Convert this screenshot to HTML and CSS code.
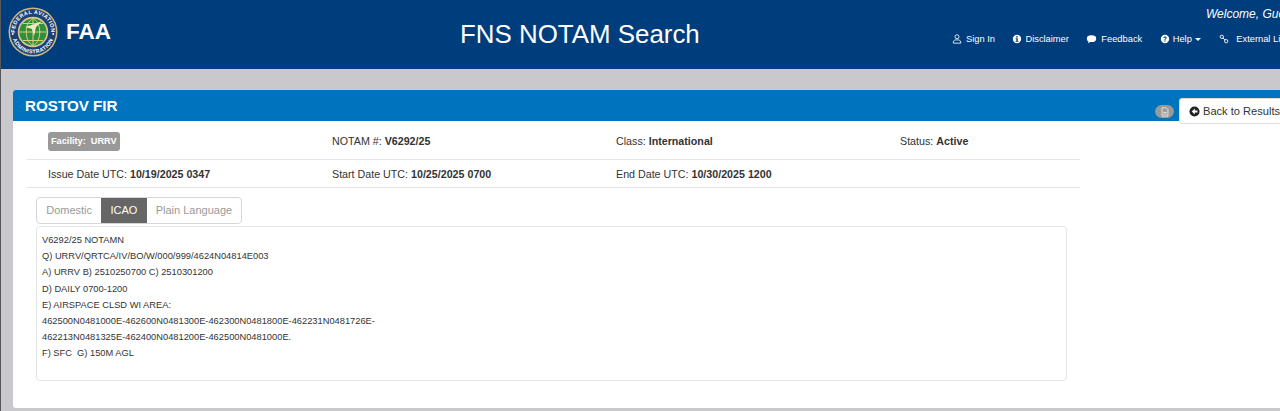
FILE: index.html
```html
<!DOCTYPE html>
<html lang="en">
<head>
    <meta charset="UTF-8">
    <meta name="viewport" content="width=device-width, initial-scale=1.0">
    <title>FNS NOTAM Search</title>
    <link rel="stylesheet" href="styles.css">
</head>
<body>

<div class="page">
    <header class="top_bar">
        <div class="brand">
            <svg class="seal" viewBox="0 0 50 50" width="50" height="50">
                <defs>
                    <path id="sealTop" d="M6.8 25a18.2 18.2 0 0 1 36.4 0"/>
                    <path id="sealBottom" d="M3.6 25a21.4 21.4 0 0 0 42.8 0"/>
                </defs>
                <circle cx="25" cy="25" r="24.5" fill="#c9b77c"/>
                <circle cx="25" cy="25" r="23" fill="#1d3f78"/>
                <circle cx="25" cy="25" r="15.2" fill="#d8c98c"/>
                <circle cx="25" cy="25" r="13.6" fill="#2f8f3c"/>
                <path d="M11.5 25h27M25 11.5v27M15 16.5h20M15 33.5h20M25 11.5c-9 4-9 23 0 27M25 11.5c9 4 9 23 0 27" fill="none" stroke="#d9cf7a" stroke-width="1"/>
                <path d="M17 20l10-3 7-3-6 6-2 9-2-7-7-2z" fill="#efe9c4"/>
                <text class="seal_text"><textPath href="#sealTop" startOffset="50%" text-anchor="middle">FEDERAL AVIATION</textPath></text>
                <text class="seal_text"><textPath href="#sealBottom" startOffset="50%" text-anchor="middle">ADMINISTRATION</textPath></text>
                <circle cx="4.8" cy="27" r="0.9" fill="#fff"/>
                <circle cx="45.2" cy="27" r="0.9" fill="#fff"/>
            </svg>
            <span class="faa">FAA</span>
        </div>
        <h1 class="app_title">FNS NOTAM Search</h1>
        <div class="user_area">
            <div class="welcome">Welcome, Guest</div>
            <nav class="nav_links">
                <a class="nav_link">
                    <svg class="nav_icon" viewBox="0 0 12 12"><circle cx="6" cy="3.3" r="2.4" fill="none" stroke="#fff"/><path d="M1.6 11v-1.4c0-1.7 1.6-2.3 2.6-2.5h3.6c1 .2 2.6.8 2.6 2.5V11z" fill="none" stroke="#fff"/></svg>
                    Sign In
                </a>
                <a class="nav_link tight">
                    <svg class="nav_icon" viewBox="0 0 12 12"><circle cx="6" cy="6" r="5" fill="#fff"/><rect x="5.1" y="2.6" width="1.8" height="1.7" fill="#003d7d"/><path d="M4.4 5.2h2.5v3.2h.8v1H4.4v-1h.8V6.2h-.8z" fill="#003d7d"/></svg>
                    Disclaimer
                </a>
                <a class="nav_link">
                    <svg class="nav_icon wide" viewBox="0 0 12 12"><ellipse cx="6" cy="5.6" rx="5.6" ry="4"/><path d="M3 8l-1.4 3L6 9z"/></svg>
                    Feedback
                </a>
                <a class="nav_link tight">
                    <svg class="nav_icon" viewBox="0 0 12 12"><circle cx="6" cy="6" r="5" fill="#fff"/><path d="M4.1 4.8c0-2.4 3.9-2.4 3.9-.2 0 1.4-1.5 1.3-1.5 2.5H5.3c0-1.7 1.4-1.6 1.4-2.4 0-.8-1.3-.8-1.4.1z" fill="#003d7d"/><rect x="5.2" y="7.7" width="1.4" height="1.4" fill="#003d7d"/></svg>
                    Help
                    <span class="caret"></span>
                </a>
                <a class="nav_link external">
                    <svg class="nav_icon" viewBox="0 0 12 12"><circle cx="3.4" cy="3.4" r="2" fill="none" stroke="#fff" stroke-width="1.1"/><circle cx="8.6" cy="8.6" r="2" fill="none" stroke="#fff" stroke-width="1.1"/><path d="M4.8 4.8l2.4 2.4" stroke="#fff" stroke-width="1.1"/></svg>
                    External Links
                </a>
            </nav>
        </div>
    </header>

    <main class="content">
        <section class="panel">
            <div class="panel_heading">
                <h2 class="panel_title">ROSTOV FIR</h2>
                <div class="panel_tools">
                    <span class="file_badge">
                        <svg viewBox="0 0 12 12" width="10" height="10"><path d="M2.5 1h5l2 2v8h-7z" fill="none" stroke="#eee" stroke-width="1"/><path d="M4 6.5h4M4 8.5h4" stroke="#eee" stroke-width="1"/></svg>
                    </span>
                    <a class="back_button">
                        <svg viewBox="0 0 12 12" width="11" height="11"><circle cx="6" cy="6" r="5.5" fill="#222"/><path d="M6.3 2.8L3 6l3.3 3.2V7.2h2.9V4.8H6.3z" fill="#fff"/></svg>
                        Back to Results
                    </a>
                </div>
            </div>

            <div class="info_row first_row">
                <div><span class="facility_badge">Facility:&nbsp; URRV</span></div>
                <div>NOTAM #: <b>V6292/25</b></div>
                <div>Class: <b>International</b></div>
                <div>Status: <b>Active</b></div>
            </div>
            <div class="info_row second_row">
                <div>Issue Date UTC: <b>10/19/2025 0347</b></div>
                <div>Start Date UTC: <b>10/25/2025 0700</b></div>
                <div>End Date UTC: <b>10/30/2025 1200</b></div>
            </div>

            <div class="tabs">
                <a class="tab">Domestic</a>
                <a class="tab active">ICAO</a>
                <a class="tab">Plain Language</a>
            </div>

            <div class="notam_box">
                <div>V6292/25 NOTAMN</div>
                <div>Q) URRV/QRTCA/IV/BO/W/000/999/4624N04814E003</div>
                <div>A) URRV B) 2510250700 C) 2510301200</div>
                <div>D) DAILY 0700-1200</div>
                <div>E) AIRSPACE CLSD WI AREA:</div>
                <div>462500N0481000E-462600N0481300E-462300N0481800E-462231N0481726E-</div>
                <div>462213N0481325E-462400N0481200E-462500N0481000E.</div>
                <div>F) SFC&nbsp; G) 150M AGL</div>
            </div>
        </section>
    </main>
</div>

</body>
</html>
```

FILE: styles.css
```css
html, body {
    margin: 0;
    height: 100%;
    overflow: hidden;
}

body {
    background: #c9c9cd;
    font-family: "Liberation Sans", Arial, sans-serif;
    color: #333333;
}

.page {
    width: 1340px;
    border-left: 1px solid #55585c;
    height: 100%;
}

/* Top bar */
.top_bar {
    display: flex;
    height: 69px;
    background: #003d7d;
    color: #FFFFFF;
}

.brand {
    display: flex;
    align-items: center;
    width: 459px;
    height: 64px;
    padding-left: 7px;
    box-sizing: border-box;
}

.seal {
    flex: none;
}

.seal_text {
    font-size: 5.4px;
    font-weight: bold;
    letter-spacing: 0.4px;
    fill: #FFFFFF;
}

.faa {
    margin-left: 8px;
    font-size: 22.5px;
    font-weight: bold;
}

.app_title {
    width: 492px;
    margin: 0;
    padding-top: 18px;
    font-size: 25.9px;
    line-height: 32px;
    font-weight: normal;
}

.user_area {
    flex: 1;
}

.welcome {
    padding: 7px 0 0 254px;
    font-size: 12px;
    line-height: 15px;
    font-style: italic;
}

.nav_links {
    display: flex;
    gap: 17.5px;
    margin-top: 10px;
    font-size: 9.3px;
    line-height: 14px;
}

.nav_link {
    display: flex;
    align-items: center;
    gap: 4px;
    white-space: nowrap;
}

.tight {
    gap: 3px;
}

.external {
    gap: 7px;
    margin-left: 1px;
}

.nav_icon {
    width: 10px;
    height: 10px;
    fill: #FFFFFF;
}

.wide {
    width: 11px;
}

.caret {
    border-top: 3px solid #FFFFFF;
    border-left: 3px solid transparent;
    border-right: 3px solid transparent;
}

/* Panel */
.content {
    padding: 21px 0 0 12px;
}

.panel {
    height: 318px;
    background: #FFFFFF;
    border-radius: 3px 0 0 3px;
}

.panel_heading {
    display: flex;
    justify-content: space-between;
    height: 31px;
    padding-left: 12px;
    background: #0073bf;
    border-radius: 3px 0 0 0;
}

.panel_title {
    margin: 0;
    font-size: 15.2px;
    line-height: 32px;
    font-weight: bold;
    color: #FFFFFF;
}

.panel_tools {
    display: flex;
    align-items: flex-start;
    gap: 5px;
    width: 186px;
    padding-top: 8px;
}

.file_badge {
    display: flex;
    align-items: center;
    justify-content: center;
    width: 19px;
    height: 13px;
    margin-top: 7px;
    background: #9a9a9a;
    border-radius: 7px;
}

.back_button {
    display: flex;
    align-items: center;
    gap: 3px;
    flex: 1;
    height: 24px;
    padding-left: 9px;
    background: #FFFFFF;
    border: 1px solid #dddddd;
    border-radius: 3px 0 0 3px;
    font-size: 11.1px;
    white-space: nowrap;
}

.info_row {
    display: grid;
    grid-template-columns: 284px 284px 284px 1fr;
    align-items: center;
    width: 1053px;
    margin-left: 14px;
    padding-left: 21px;
    box-sizing: border-box;
    border-bottom: 1px solid #e6e6e6;
    font-size: 10.7px;
}

.first_row {
    height: 39px;
    padding-top: 2px;
}

.second_row {
    height: 28px;
}

.facility_badge {
    display: inline-block;
    padding: 3px 3px;
    background: #999999;
    border-radius: 3px;
    font-size: 9.2px;
    line-height: 13px;
    font-weight: bold;
    color: #FFFFFF;
}

/* Tabs */
.tabs {
    display: flex;
    width: max-content;
    margin: 9px 0 0 23px;
    border: 1px solid #d6d6d6;
    border-radius: 4px;
    font-size: 11px;
    line-height: 25px;
    color: #999999;
}

.tab {
    padding: 0 9.2px;
}

.active {
    background: #666666;
    color: #FFFFFF;
}

.notam_box {
    width: 1024px;
    height: 148px;
    margin: 2px 0 0 23px;
    padding: 5px 0 0 5px;
    border: 1px solid #e4e4e4;
    border-radius: 4px;
    font-size: 9.3px;
    line-height: 16.2px;
}
```
